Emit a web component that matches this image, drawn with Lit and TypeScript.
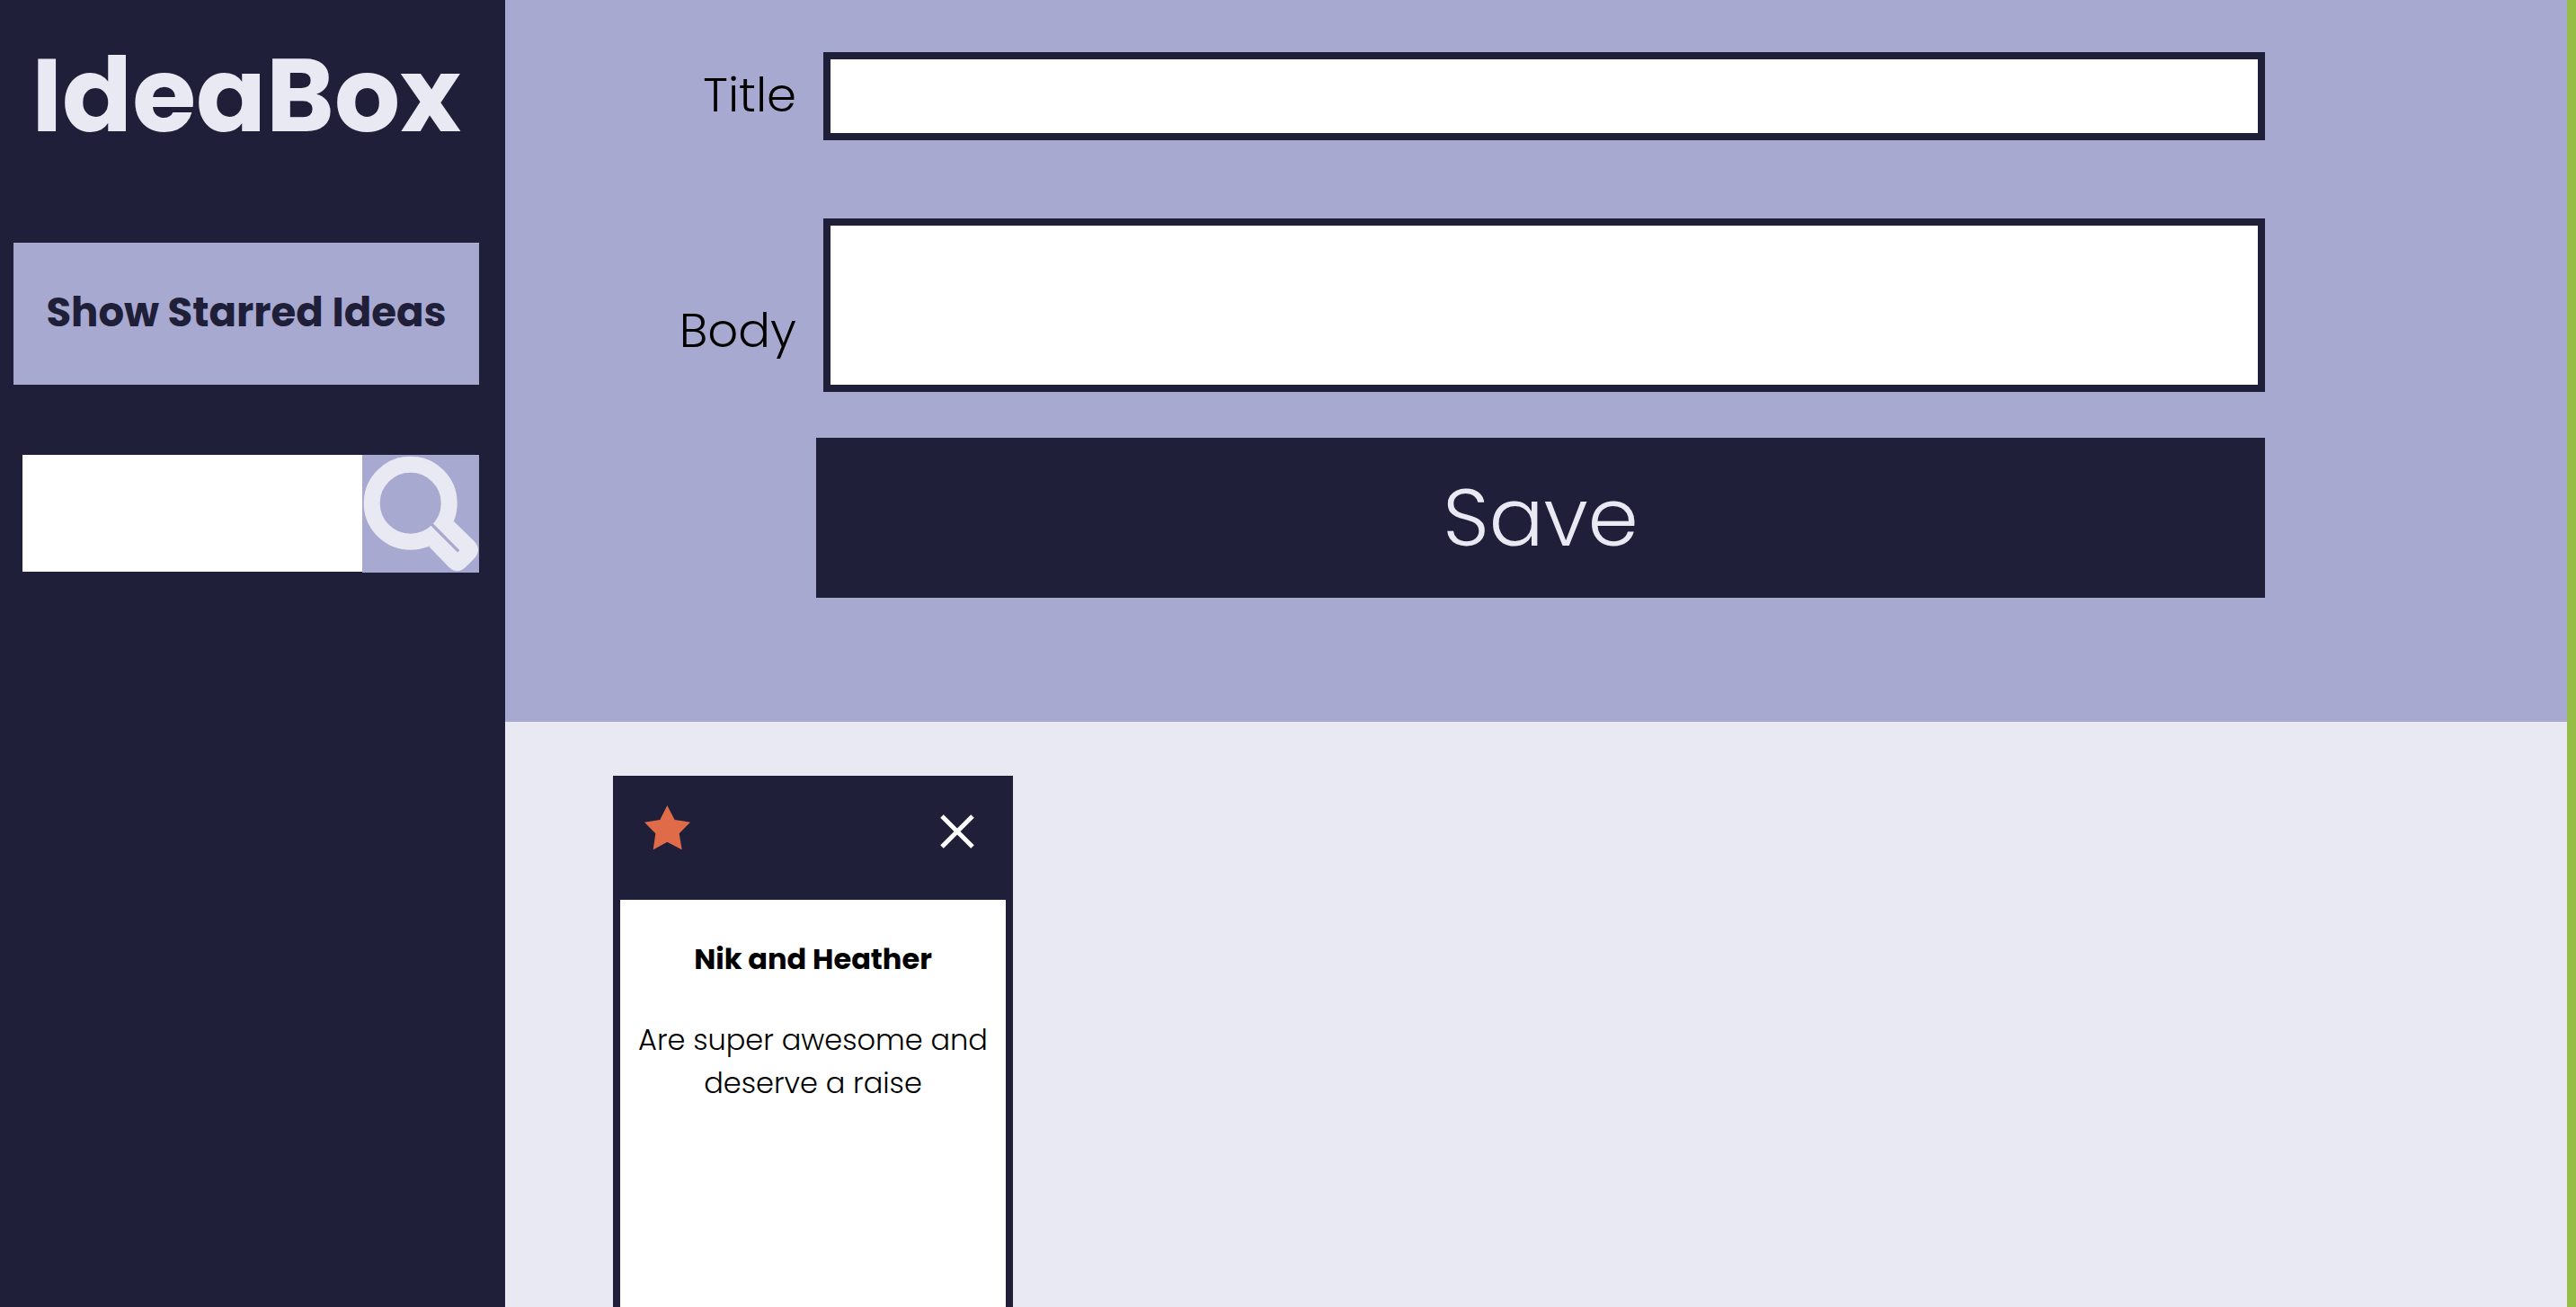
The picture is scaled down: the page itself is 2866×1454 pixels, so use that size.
import { LitElement, html, css } from "lit";
import { customElement, property, state } from "lit/decorators.js";

interface Idea {
  id: number;
  title: string;
  body: string;
  starred: boolean;
}

@customElement("idea-card")
class IdeaCard extends LitElement {
  @property({ attribute: false }) idea!: Idea;

  static styles = css`
    :host {
      display: flex;
      flex-direction: column;
      background: #ffffff;
      border: 8px solid #1f1f3a;
      border-width: 0 8px;
    }
    .bar {
      display: flex;
      justify-content: space-between;
      align-items: flex-start;
      height: 138px;
      padding: 33px 35px 0 27px;
      box-sizing: border-box;
      background: #1f1f3a;
    }
    .action {
      display: block;
      padding: 0;
      border: 0;
      background: none;
      cursor: pointer;
    }
    .close {
      padding-top: 10px;
    }
    .icon {
      display: block;
    }
    .content {
      padding: 42px 8px;
      text-align: center;
      font-size: 32px;
      line-height: 48px;
      color: #000000;
    }
    .title {
      margin: 0 0 42px;
      font-size: 32px;
      font-weight: 700;
    }
    .body {
      margin: 0;
      font-weight: 300;
    }
  `;

  render() {
    return html`
      <header class="bar">
        <button class="action" type="button" aria-label="Star idea" aria-pressed=${this.idea.starred}>
          <svg class="icon" width="51" height="50" viewBox="0 0 153 150" aria-hidden="true">
            <path
              fill="#e06b48"
              d="M76 0 L101 48 L153 56 L116 94 L125 148 L76 122 L29 148 L37 94 L0 56 L52 48 Z"
            />
          </svg>
        </button>
        <button class="action close" type="button" aria-label="Delete idea">
          <svg class="icon" width="38" height="38" viewBox="0 0 38 38" aria-hidden="true">
            <path stroke="#ffffff" stroke-width="5" fill="none" d="M2 2 L36 36 M36 2 L2 36" />
          </svg>
        </button>
      </header>
      <div class="content">
        <h2 class="title">${this.idea.title}</h2>
        <p class="body">${this.idea.body}</p>
      </div>
    `;
  }
}

@customElement("app-root")
class AppRoot extends LitElement {
  @state() private ideas: Idea[] = [
    { id: 1, title: "Nik and Heather", body: "Are super awesome and deserve a raise", starred: true },
  ];

  static styles = css`
    :host {
      display: grid;
      grid-template-columns: 562px minmax(0, 1fr);
      min-height: 100vh;
      box-sizing: border-box;
      border-right: 10px solid #96be46;
      background: #e9e9f3;
      font-family: Poppins, Inter, "Open Sans", sans-serif;
      font-feature-settings: "cv11";
    }
    button,
    input,
    textarea {
      font: inherit;
      font-feature-settings: inherit;
      border-radius: 0;
      box-sizing: border-box;
    }
    button {
      border: 0;
      cursor: pointer;
    }
    .sidebar {
      display: flex;
      flex-direction: column;
      padding: 40px 29px 0 15px;
      background: #1f1f3a;
    }
    .logo {
      margin: 0 0 98px;
      text-align: center;
      font-size: 115px;
      line-height: 132px;
      font-weight: 700;
      color: #e9e9f3;
    }
    .starred {
      height: 158px;
      padding: 0 0 3px;
      background: #a8a9d0;
      color: #1f1f3a;
      font-size: 45px;
      font-weight: 700;
      white-space: nowrap;
    }
    .search {
      display: flex;
      margin: 78px 0 0 10px;
    }
    .query {
      flex: 1;
      min-width: 0;
      height: 130px;
      padding: 0 16px;
      border: 0;
      background: #ffffff;
      font-size: 45px;
    }
    .find {
      padding: 0;
      background: #a8a9d0;
    }
    .glass {
      display: block;
    }
    .main {
      display: flex;
      flex-direction: column;
    }
    .form {
      display: grid;
      grid-template-columns: 324px minmax(0, 1fr);
      column-gap: 30px;
      padding: 58px 336px 138px 0;
      background: #a8a9d0;
    }
    .label {
      text-align: right;
      font-size: 53px;
      line-height: 64px;
      font-weight: 300;
      color: #000000;
    }
    .label-title {
      padding-top: 16px;
    }
    .label-body {
      padding-top: 93px;
    }
    .field {
      display: block;
      width: 100%;
      padding: 8px 16px;
      border: 8px solid #1f1f3a;
      background: #ffffff;
      font-size: 45px;
      resize: none;
    }
    .field-title {
      height: 98px;
      margin-bottom: 87px;
    }
    .field-body {
      height: 193px;
      margin-bottom: 51px;
    }
    .save {
      grid-column: 2;
      height: 178px;
      margin-left: -8px;
      padding: 0;
      background: #1f1f3a;
      color: #e9e9f3;
      font-size: 90px;
      font-weight: 300;
    }
    .ideas {
      flex: 1;
      display: grid;
      grid-template-columns: repeat(auto-fill, 445px);
      gap: 60px;
      padding: 60px 120px 0;
    }
  `;

  render() {
    return html`
      <aside class="sidebar">
        <h1 class="logo">IdeaBox</h1>
        <button class="starred" type="button">Show Starred Ideas</button>
        <form class="search" role="search" @submit=${(e: Event) => e.preventDefault()}>
          <input class="query" type="text" aria-label="Search ideas" />
          <button class="find" type="submit" aria-label="Search">
            <svg class="glass" width="130" height="131" viewBox="0 0 130 131" aria-hidden="true">
              <path
                fill="#e9e9f3"
                d="M102 74 L124.500 96 Q133.500 105.500 124.500 115.500 L115 125 Q105.500 133.500 96.500 125 L74.300 102 Z"
              />
              <circle cx="53.700" cy="53.700" r="43" fill="#a8a9d0" stroke="#e9e9f3" stroke-width="18" />
              <path stroke="#a8a9d0" stroke-width="3.400" d="M76 76 L107.200 107.400" />
            </svg>
          </button>
        </form>
      </aside>
      <main class="main">
        <form class="form" @submit=${(e: Event) => e.preventDefault()}>
          <label class="label label-title" for="title">Title</label>
          <input class="field field-title" id="title" type="text" />
          <label class="label label-body" for="body">Body</label>
          <textarea class="field field-body" id="body"></textarea>
          <button class="save" type="submit">Save</button>
        </form>
        <section class="ideas" aria-label="Ideas">
          ${this.ideas.map((idea) => html`<idea-card .idea=${idea}></idea-card>`)}
        </section>
      </main>
    `;
  }
}
